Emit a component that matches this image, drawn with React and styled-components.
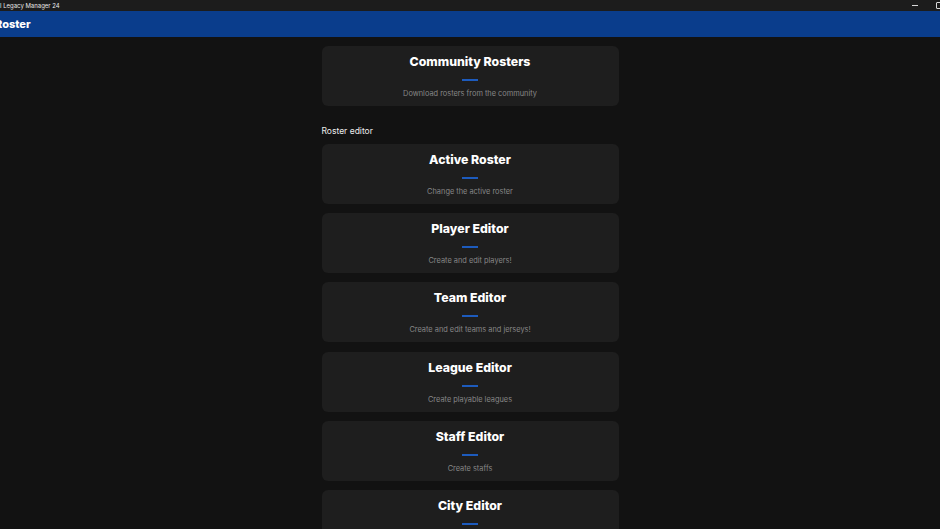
import React from "react";
import styled, { createGlobalStyle } from "styled-components";

const Global = createGlobalStyle`
  html, body { margin: 0; padding: 0; background: #121212; overflow: hidden; }
  body { font-family: Inter, "Noto Sans", sans-serif; }
`;

const Page = styled.div`
  width: 940px;
  height: 529px;
  display: flex;
  flex-direction: column;
  background: #121212;
  overflow: hidden;
`;

const TitleBar = styled.div`
  height: 11px;
  background: #1c1c1c;
  display: flex;
  align-items: center;
  justify-content: space-between;
  color: #e8e8e8;
  font-size: 6px;
  flex-shrink: 0;
`;

const TitleText = styled.span`
  margin-left: 0;
  white-space: nowrap;
`;

const WinControls = styled.div`
  display: flex;
  align-items: center;
  gap: 18px;
  margin-right: -3px;
`;

const MinBtn = styled.span`
  display: block;
  width: 6px;
  height: 1px;
  background: #d8d8d8;
`;

const MaxBtn = styled.span`
  display: block;
  width: 5px;
  height: 5px;
  border: 1px solid #d8d8d8;
  border-radius: 1px;
`;

const Header = styled.div`
  height: 26px;
  background: #0a3d8c;
  display: flex;
  align-items: center;
  flex-shrink: 0;
  overflow: hidden;
`;

const HeaderTitle = styled.span`
  margin-left: -5px;
  color: #fff;
  font-weight: 800;
  font-size: 11px;
`;

const Content = styled.div`
  width: 297px;
  margin: 0 auto;
  padding-top: 9px;
  display: flex;
  flex-direction: column;
`;

const Stack = styled.div`
  display: flex;
  flex-direction: column;
  gap: 9.2px;
`;

const Card = styled.div`
  height: 60px;
  box-sizing: border-box;
  background: #1e1e1e;
  border-radius: 6px;
  padding-top: 8px;
  display: flex;
  flex-direction: column;
  align-items: center;
  flex-shrink: 0;
`;

const CardTitle = styled.div`
  color: #fff;
  font-weight: 800;
  font-size: 12.3px;
  line-height: 16px;
`;

const Accent = styled.div`
  width: 16px;
  height: 2px;
  background: #1d5bbd;
  margin-top: 9px;
`;

const CardSub = styled.div`
  color: #878787;
  font-size: 7.4px;
  line-height: 10px;
  margin-top: 8px;
`;

const SectionLabel = styled.div`
  color: #ececec;
  font-size: 8.5px;
  line-height: 12px;
  margin-top: 19px;
  margin-bottom: 7px;
`;

const Tile = ({ title, sub }) => (
  <Card>
    <CardTitle>{title}</CardTitle>
    <Accent />
    <CardSub>{sub}</CardSub>
  </Card>
);

const editors = [
  ["Active Roster", "Change the active roster"],
  ["Player Editor", "Create and edit players!"],
  ["Team Editor", "Create and edit teams and jerseys!"],
  ["League Editor", "Create playable leagues"],
  ["Staff Editor", "Create staffs"],
  ["City Editor", "Create and edit cities"],
];

export default function App() {
  return (
    <Page>
      <Global />
      <TitleBar>
        <TitleText>l Legacy Manager 24</TitleText>
        <WinControls>
          <MinBtn />
          <MaxBtn />
        </WinControls>
      </TitleBar>
      <Header>
        <HeaderTitle>Roster</HeaderTitle>
      </Header>
      <Content>
        <Tile title="Community Rosters" sub="Download rosters from the community" />
        <SectionLabel>Roster editor</SectionLabel>
        <Stack>
          {editors.map(([t, s]) => (
            <Tile key={t} title={t} sub={s} />
          ))}
        </Stack>
      </Content>
    </Page>
  );
}
